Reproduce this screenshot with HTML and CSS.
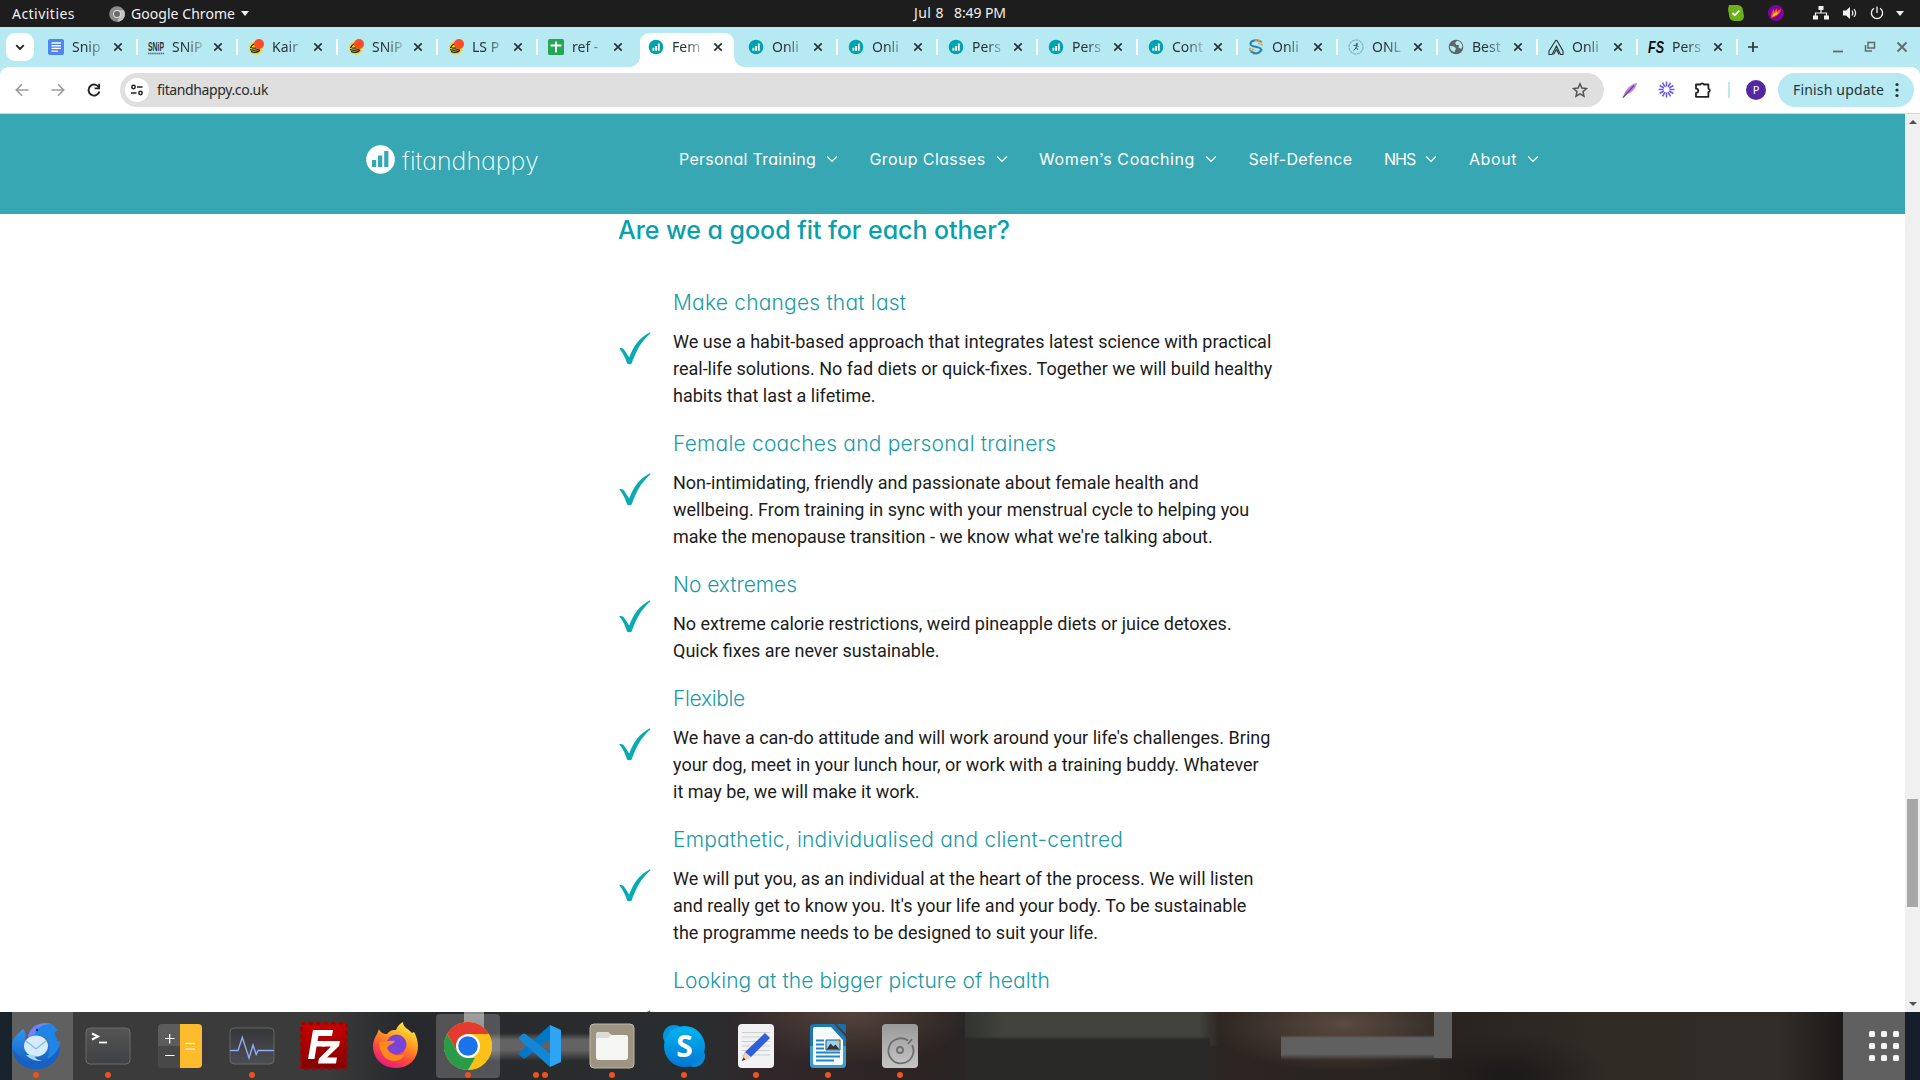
FILE: index.html
```html
<!DOCTYPE html>
<html lang="en">
<head>
<meta charset="utf-8">
<title>fitandhappy</title>
<link rel="stylesheet" href="styles.css">
</head>
<body>
<svg class="defs" width="0" height="0">
  <defs>
    <linearGradient id="blue" x1="0" y1="0" x2="0" y2="1"><stop offset="0" stop-color="#00b5f0"/><stop offset="1" stop-color="#0078d4"/></linearGradient>
    <linearGradient id="bird" x1="0" y1="0" x2="0" y2="1"><stop offset="0" stop-color="#2b9af3"/><stop offset="1" stop-color="#1455b5"/></linearGradient>
    <linearGradient id="fox" x1=".8" y1="0" x2=".3" y2="1"><stop offset="0" stop-color="#fff44f"/><stop offset=".4" stop-color="#ff9a1f"/><stop offset=".7" stop-color="#ff4a3c"/><stop offset="1" stop-color="#e31587"/></linearGradient>
    <linearGradient id="slate" x1="0" y1="0" x2="0" y2="1"><stop offset="0" stop-color="#555"/><stop offset="1" stop-color="#3f4042"/></linearGradient>
    <linearGradient id="mon" x1="0" y1="0" x2="0" y2="1"><stop offset="0" stop-color="#35363a"/><stop offset="1" stop-color="#4c4e54"/></linearGradient>
    <linearGradient id="red" x1="0" y1="0" x2="0" y2="1"><stop offset="0" stop-color="#c80000"/><stop offset="1" stop-color="#840000"/></linearGradient>
    <linearGradient id="disk" x1="0" y1="0" x2="0" y2="1"><stop offset="0" stop-color="#9a9a9a"/><stop offset="1" stop-color="#c6c6c6"/></linearGradient>
    <symbol id="fit" viewBox="0 0 16 16"><circle cx="8" cy="8" r="7.3" fill="#00a3ad"/><path d="M4.500 8.800h1.800v3H4.500zM7.200 7h1.800v4.800H7.200zM9.900 4.500h1.800v7.300H9.900z" fill="#fff"/></symbol>
    <symbol id="kite" viewBox="0 0 16 16"><circle cx="7.8" cy="9" r="6.8" fill="#f5d327"/><path d="M2 10.500c4 1.500 7 1 9.500-1M3 12.500c3 1.500 7 1 9-1.500M2.500 9c1-3 3-4 5-5M4 8.500c0 1 3 .8 5 .2" stroke="#26251c" stroke-width="1.300" fill="none"/><circle cx="11" cy="5" r="5" fill="#fd4d22"/></symbol>
    <symbol id="x" viewBox="0 0 10 10"><path d="M1.300 1.300l7.400 7.400M8.700 1.300L1.300 8.700" stroke="#24353a" stroke-width="1.700"/></symbol>
    <symbol id="chev" viewBox="0 0 12 8"><path d="M1.200 1.500L6 6.400l4.800-4.900" stroke="#fff" stroke-width="1.200" fill="none"/></symbol>
    <symbol id="tick" viewBox="0 0 32 34"><path d="M.8 17.500C3 16.300 5.200 17.500 6.500 20l4.200 6.500C14.500 16 20.500 6.500 31.600 1.200l.2 1.200C22 11 17.500 20.500 13.200 32.200c-.7 1.400-4 1.300-4.700 0C6.800 27 4.500 21.500.8 17.500z" fill="#08abb0"/></symbol>
  </defs>
</svg>

<header class="topbar">
  <div class="top-left">
    <span class="activities">Activities</span>
    <svg width="16" height="16" viewBox="0 0 16 16"><circle cx="8" cy="8" r="7.800" fill="#8c8c8c"/><path d="M8 4.300h7A7.800 7.800 0 0 1 8.300 15.800L11 10z" fill="#c4c4c4"/><circle cx="8" cy="8" r="3.900" fill="#ddd"/><circle cx="8" cy="8" r="3" fill="#6b6b6b"/></svg>
    <span class="appname">Google Chrome</span>
    <i class="caret"></i>
  </div>
  <div class="clock"><span class="date">Jul 8</span><span>8:49 PM</span></div>
  <div class="tray">
    <svg class="t1" width="16" height="16" viewBox="0 0 16 16"><path d="M1 0h9a6 6 0 0 1 5 6l1 5c0 3-2 5-5 5H6a6 6 0 0 1-5-6L0 4z" fill="#6bb016"/><path d="M4.500 8l2.300 2.300L11.300 5.700" stroke="#fff" stroke-width="1.800" fill="none"/></svg>
    <svg class="t2" width="16" height="16" viewBox="0 0 16 16"><circle cx="8" cy="8" r="8" fill="#7c05a0"/><path d="M3 13c0-4 2-8 3-9v3l3-4v3l4-2c0 4-4 8-10 9z" fill="#ff4a1c"/><path d="M4 11.500L6.500 7v2L9 6v2l2-1c-2 3-4 4-7 4.500z" fill="#ffc12e"/></svg>
    <svg class="t3" width="16" height="14" viewBox="0 0 16 14"><path d="M5.500 0h5v4h-5zM0 9.500h5v4H0zM11 9.500h5v4h-5z" fill="#f2f2f2"/><path d="M8 3v4M2.500 10V7h11v3" stroke="#f2f2f2" stroke-width="1.200" fill="none"/></svg>
    <svg class="t4" width="16" height="14" viewBox="0 0 16 14"><path d="M1 4.500h3L8 1v12L4 9.500H1z" fill="#f2f2f2"/><path d="M10 4.500c1 1.500 1 3.500 0 5M12 3c2 2.500 2 5.500 0 8" stroke="#f2f2f2" stroke-width="1.200" fill="none"/></svg>
    <svg class="t5" width="14" height="14" viewBox="0 0 14 14"><path d="M7 .5v6.500M4 2.300a5.600 5.600 0 1 0 6 0" stroke="#f2f2f2" stroke-width="1.300" fill="none"/></svg>
    <i class="caret"></i>
  </div>
</header>

<nav class="tabs">
  <div class="tabsearch"><svg width="10" height="7" viewBox="0 0 10 7"><path d="M1.200 1.200L5 5l3.800-3.800" stroke="#222" stroke-width="1.900" fill="none"/></svg></div>
  <div class="tab"><svg class="fav" viewBox="0 0 16 16"><rect width="16" height="16" rx="2" fill="#4f84f3"/><path d="M3.500 4h9.500M3.500 6.700h9.500M3.500 9.400h9.500M3.500 12.100h6.500" stroke="#fff" stroke-width="1.400"/></svg><span>Snip</span><svg class="close"><use href="#x"/></svg></div>
  <div class="tab"><svg class="fav" viewBox="0 0 16 16"><text class="snp" x="0" y="11.500" textLength="16" lengthAdjust="spacingAndGlyphs">SNiP</text><path d="M0 14.500h16" stroke="#4e6c70" stroke-width="1.600" stroke-dasharray="1.500 .6"/></svg><span>SNiP</span><svg class="close"><use href="#x"/></svg></div>
  <div class="tab"><svg class="fav"><use href="#kite"/></svg><span>Kair</span><svg class="close"><use href="#x"/></svg></div>
  <div class="tab"><svg class="fav"><use href="#kite"/></svg><span>SNiP</span><svg class="close"><use href="#x"/></svg></div>
  <div class="tab"><svg class="fav"><use href="#kite"/></svg><span>LS P</span><svg class="close"><use href="#x"/></svg></div>
  <div class="tab nosep"><svg class="fav" viewBox="0 0 16 16"><rect width="16" height="16" rx="1.500" fill="#24a455"/><path d="M8 2.500v11M2.500 6.500h11" stroke="#fff" stroke-width="1.800"/></svg><span>ref -</span><svg class="close"><use href="#x"/></svg></div>
  <div class="tab active nosep"><svg class="fav"><use href="#fit"/></svg><span>Fem</span><svg class="close"><use href="#x"/></svg></div>
  <div class="tab"><svg class="fav"><use href="#fit"/></svg><span>Onli</span><svg class="close"><use href="#x"/></svg></div>
  <div class="tab"><svg class="fav"><use href="#fit"/></svg><span>Onli</span><svg class="close"><use href="#x"/></svg></div>
  <div class="tab"><svg class="fav"><use href="#fit"/></svg><span>Pers</span><svg class="close"><use href="#x"/></svg></div>
  <div class="tab"><svg class="fav"><use href="#fit"/></svg><span>Pers</span><svg class="close"><use href="#x"/></svg></div>
  <div class="tab"><svg class="fav"><use href="#fit"/></svg><span>Cont</span><svg class="close"><use href="#x"/></svg></div>
  <div class="tab"><svg class="fav" viewBox="0 0 16 16"><path d="M13.500 3C9 0 2 1.500 2.500 5.300c.5 3.200 10.500 1.500 10.500 5.200 0 3.500-6 5-10.500 2" stroke="#2583b8" stroke-width="2" fill="none"/><path d="M7 1.500c3-.8 6 .5 7.500 3.500M10 4.500c2 0 4 1 5 2.500M1 9.500c2.500 0 5 .8 6 2.500" stroke="#e59a52" stroke-width="1.600" stroke-dasharray="2 1" fill="none"/><path d="M5 14.800c4 1 8-1 9.500-4.500M1 11c2 0 4 1 5 2.500" stroke="#777" stroke-dasharray="2 .7" fill="none"/></svg><span>Onli</span><svg class="close"><use href="#x"/></svg></div>
  <div class="tab"><svg class="fav" viewBox="0 0 16 16"><circle cx="8" cy="8" r="7" fill="none" stroke="#86b7bf" stroke-width="1.300" stroke-dasharray="3 .6"/><circle cx="9" cy="5" r="1" fill="#33565e"/><path d="M5.500 6.500l3-.5-.5 3-2.500 2.500M8 8.500l2 2.500M8.500 6.500l2 1" stroke="#33565e" fill="none"/></svg><span>ONL</span><svg class="close"><use href="#x"/></svg></div>
  <div class="tab"><svg class="fav" viewBox="0 0 16 16"><circle cx="8" cy="8" r="7.300" fill="#5f6569"/><path d="M2 7l4 .5 2 2L6.500 13C3.500 12.500 1.500 10 2 7zM9 1.800L7 4l1.500 2H11l-.5 2.500 2.500 1.500 1.300-2C14.500 5 12.500 2.300 9 1.800z" fill="#b6e9f1"/></svg><span>Best</span><svg class="close"><use href="#x"/></svg></div>
  <div class="tab"><svg class="fav" viewBox="0 0 16 16"><path d="M1 15.500V12L7 2.500C7.500 1 9 1 9.500 2.500L15 12v3.500h-2.500L8.500 7 4 15.500zM5.500 15.500l3-5 2.500 5" stroke="#26363a" stroke-width="1.100" fill="none"/></svg><span>Onli</span><svg class="close"><use href="#x"/></svg></div>
  <div class="tab"><svg class="fav" viewBox="0 0 16 16"><text class="fs" x="0" y="14" textLength="16" lengthAdjust="spacingAndGlyphs">FS</text></svg><span>Pers</span><svg class="close"><use href="#x"/></svg></div>
  <svg class="plus" width="12" height="12" viewBox="0 0 12 12"><path d="M6 1v10M1 6h10" stroke="#24353a" stroke-width="1.700"/></svg>
  <div class="winctl">
    <svg width="12" height="12" viewBox="0 0 12 12"><path d="M1 10.500h10" stroke="#5c6b70" stroke-width="1.800"/></svg>
    <svg width="12" height="12" viewBox="0 0 12 12"><path d="M4 1.500h6.500v5.500H4z" stroke="#5c6b70" stroke-width="1.500" fill="none"/><path d="M1.500 4v6H8" stroke="#5c6b70" stroke-width="1.500" fill="none"/></svg>
    <svg width="12" height="12" viewBox="0 0 12 12"><path d="M1.500 1.500l9 9M10.500 1.500l-9 9" stroke="#5c6b70" stroke-width="1.800"/></svg>
  </div>
</nav>

<div class="toolbar">
  <svg class="b1" width="14" height="14" viewBox="0 0 14 14"><path d="M13.500 7H1.500M7 1.300L1.300 7 7 12.700" stroke="#9c9c9c" stroke-width="1.600" fill="none"/></svg>
  <svg class="b2" width="14" height="14" viewBox="0 0 14 14"><path d="M.5 7h12M7 1.300L12.700 7 7 12.700" stroke="#9c9c9c" stroke-width="1.600" fill="none"/></svg>
  <svg class="b3" width="14" height="14" viewBox="0 0 14 14"><path d="M12 4.600A5.500 5.500 0 1 0 12.400 8.500" stroke="#222" stroke-width="1.900" fill="none"/><path d="M13 .8v5.400H7.600V4.500h3.700V.8z" fill="#222"/></svg>
  <div class="omnibox">
    <div class="site"><svg width="14" height="12" viewBox="0 0 14 12"><g fill="none" stroke="#222" stroke-width="1.500"><circle cx="3.500" cy="3" r="1.700"/><path d="M7 3h5.500M1 9h5.500"/><circle cx="10.500" cy="9" r="1.700"/></g></svg></div>
    <span class="url">fitandhappy.co.uk</span>
    <svg class="star" width="16" height="16" viewBox="0 0 16 16"><path d="M8 1.800l1.900 4.300 4.600.4-3.500 3.100 1 4.600L8 11.800l-4 2.400 1-4.600L1.500 6.500l4.600-.4z" stroke="#555" stroke-width="1.500" fill="none"/></svg>
  </div>
  <svg class="e1" width="16" height="16" viewBox="0 0 16 16"><path d="M1.500 14.500C3 8 8 2.500 15 .8 14 7 9 12 3.500 12.500z" fill="#c38be0"/><path d="M1 15.500L12 3.500" stroke="#693a9c" stroke-width="1.300"/></svg>
  <svg class="e2" width="17" height="17" viewBox="0 0 17 17"><path d="M8.500 .5v5M8.500 11.500v5M.5 8.500h5M11.500 8.500h5M4.500 1.600l2.500 4.300M10 11.100l2.500 4.300M12.500 1.600L10 5.900M7 11.100l-2.500 4.300M1.600 4.500l4.300 2.500M11.100 10l4.300 2.500M15.400 4.500L11.100 7M5.900 10l-4.300 2.500" stroke="#6a5cf0" stroke-width="1.600"/></svg>
  <svg class="e3" width="18" height="18" viewBox="0 0 18 18"><path d="M2 3.500h4.500a1.800 1.800 0 0 1 3.400 0h4.500v4.200a1.800 1.800 0 0 1 0 3.500v4.600H2v-4c3 0 3-4.200 0-4.200z" stroke="#222" stroke-width="1.800" fill="none" stroke-linejoin="round"/></svg>
  <i class="bar"></i>
  <span class="avatar">P</span>
  <div class="finish"><span>Finish update</span><svg width="4" height="16" viewBox="0 0 4 16"><g fill="#24353a"><circle cx="2" cy="2.500" r="1.600"/><circle cx="2" cy="8" r="1.600"/><circle cx="2" cy="13.500" r="1.600"/></g></svg></div>
</div>

<div class="viewport">
  <div class="page">
    <div class="siteheader">
      <a class="logo"><svg width="29" height="29" viewBox="0 0 29 29"><circle cx="14.500" cy="14.500" r="14.300" fill="#fff"/><path d="M6 15h4.200v7H6zM12 10.500h4.300V22H12zM18.200 6h4.200v16h-4.200z" fill="#36a7b3"/></svg><span>fitandhappy</span></a>
      <div class="menu">
        <a class="m-pt"><span>Personal Training</span><svg><use href="#chev"/></svg></a>
        <a class="m-gc"><span>Group Classes</span><svg><use href="#chev"/></svg></a>
        <a class="m-wc"><span>Women’s Coaching</span><svg><use href="#chev"/></svg></a>
        <a class="m-sd"><span>Self-Defence</span></a>
        <a class="m-nhs"><span>NHS</span><svg><use href="#chev"/></svg></a>
        <a class="m-about"><span>About</span><svg><use href="#chev"/></svg></a>
      </div>
    </div>
    <main class="content">
      <h2>Are we a good fit for each other?</h2>
      <section class="item"><svg><use href="#tick"/></svg><div><h3>Make changes that last</h3><p>We use a habit-based approach that integrates latest science with practical<br>real-life solutions. No fad diets or quick-fixes. Together we will build healthy<br>habits that last a lifetime.</p></div></section>
      <section class="item"><svg><use href="#tick"/></svg><div><h3>Female coaches and personal trainers</h3><p>Non-intimidating, friendly and passionate about female health and<br>wellbeing. From training in sync with your menstrual cycle to helping you<br>make the menopause transition - we know what we're talking about.</p></div></section>
      <section class="item short"><svg><use href="#tick"/></svg><div><h3 class="snug">No extremes</h3><p>No extreme calorie restrictions, weird pineapple diets or juice detoxes.<br>Quick fixes are never sustainable.</p></div></section>
      <section class="item"><svg><use href="#tick"/></svg><div><h3 class="tight">Flexible</h3><p>We have a can-do attitude and will work around your life's challenges. Bring<br>your dog, meet in your lunch hour, or work with a training buddy. Whatever<br>it may be, we will make it work.</p></div></section>
      <section class="item"><svg><use href="#tick"/></svg><div><h3>Empathetic, individualised and client-centred</h3><p>We will put you, as an individual at the heart of the process. We will listen<br>and really get to know you. It's your life and your body. To be sustainable<br>the programme needs to be designed to suit your life.</p></div></section>
      <section class="item"><svg><use href="#tick"/></svg><div><h3 class="even">Looking at the bigger picture of health</h3></div></section>
    </main>
  </div>
  <div class="scroll"><i class="up"></i><i class="thumb"></i><i class="down"></i></div>
</div>

<footer class="dock">
  <div class="app"><svg viewBox="0 0 48 48"><path d="M11 7c3 3 3 7 2 12l3 12 22-10 10-2c1 17-9 28-24 28C9 47-1 36 0 22 1 15 6 12 11 7z" fill="url(#bird)"/><path d="M16 13c3-8 9-12 18-12 7 0 9 4 12 8-3 0-4 1-3 4 4 8 5 15 3 21L35 38c4-9 4-18-3-23-5-3-11-2-16 3z" fill="#1f86e8"/><path d="M16 14c2-8 9-13 18-13l5 1c-9 0-14 4-16 10-2 1-5 2-7 6z" fill="#7b7ff0"/><path d="M1 27c5 7 12 13 22 13 10 0 20-5 25-17 0 14-9 24-23 24C11 47 2 39 1 27z" fill="#1760c4"/><ellipse cx="24" cy="24" rx="12" ry="10.500" fill="#d3ebfc"/><path d="M14 33c5 5 10 6 16 6-5-1-7-3-8-6z" fill="#a9d6f8"/><path d="M14 19l10 8 10-8" stroke="#88b9df" stroke-width="1.300" fill="none"/><circle cx="25" cy="8" r="1.200" fill="#0b3276"/></svg><i></i></div>
  <div class="app"><svg viewBox="0 0 48 48"><rect x="2" y="6" width="44" height="36" rx="4" fill="url(#slate)" stroke="#6c6c6c"/><path d="M8 11.500l6 3-6 3" stroke="#fff" stroke-width="2" fill="none"/><path d="M15 20.500h8" stroke="#fff" stroke-width="1.800"/></svg><i></i></div>
  <div class="app"><svg viewBox="0 0 48 48"><rect x="2" y="2" width="44" height="44" rx="4" fill="#5c5c5c"/><path d="M2 24h22v22H6a4 4 0 0 1-4-4z" fill="#484848"/><path d="M24 2h18a4 4 0 0 1 4 4v36a4 4 0 0 1-4 4H24z" fill="#fdbc2c"/><path d="M9 16.500h9.500M13.700 12v9.500M9 33.500h9.500M29 21.500h10M29 27h10" stroke="#fff" stroke-width="1.200"/></svg></div>
  <div class="app"><svg viewBox="0 0 48 48"><rect x="2" y="6" width="44" height="36" rx="4" fill="url(#mon)" stroke="#65676a"/><path d="M2 28.500h8l4.300-13L21 36l4-13 3.200 9.500 2-4H46" stroke="#8fadf0" stroke-width="1.400" fill="none"/></svg><i></i></div>
  <div class="app"><svg viewBox="0 0 48 48"><rect x="1.500" y="1.500" width="45" height="45" fill="url(#red)"/><rect x="1.500" y="1.500" width="45" height="45" fill="none" stroke="#a30000" stroke-width="3" stroke-dasharray="4 3.500"/><path d="M8 37l5-29h20l-1 6H18.500l-1 5H26l-1 5.500h-8.500L14.500 37z" fill="#fff"/><path d="M23 19h17l-1 5-12 11.500h10l-1 6H18l1-5L31 24.500h-9z" fill="#fff"/></svg></div>
  <div class="app"><svg viewBox="0 0 48 48"><path d="M7 7c1 3 4 5 8 5 3-4 6-4 9-4 2-5 5-7 7-8 0 6 6 7 9 11l2-1c2 3 4 9 4 14 0 13-9 22-22 22S1 37 1 24c0-5 2-9 4-12z" fill="url(#fox)"/><circle cx="24.500" cy="22.500" r="10" fill="#7b44d9"/><path d="M7 20c7 0 11-2 16-1-1 3-6 3-8 7 1 5 9 10 18 6-4 9-17 9-22 1-2-4-4-8-4-13z" fill="#ff8a1c"/></svg></div>
  <div class="app current"><svg viewBox="0 0 48 48"><circle cx="24" cy="24" r="24" fill="#fbc116"/><path d="M3.200 12A24 24 0 0 1 44.800 12H24L13.600 30z" fill="#e33b2e"/><path d="M3.200 12L13.600 30 24 36h10.400L24 48A24 24 0 0 1 3.200 12z" fill="#2a9b48"/><path d="M34.400 30L24 48a24 24 0 0 0 20.800-36H24z" fill="#fbc116"/><circle cx="24" cy="24" r="12" fill="#fff"/><circle cx="24" cy="24" r="9.800" fill="#1a73e8"/></svg><i></i></div>
  <div class="app"><svg viewBox="0 0 48 48"><path d="M34 3L3.500 30.500c-1 1-.5 2 0 2.500l3 3c1 .7 2 .7 3 0L36 15z" fill="#0078c8"/><path d="M34 45L3.500 17.500c-1-1-.5-2 0-2.500l3-3c1-.7 2-.7 3 0L36 33z" fill="#1387d6"/><path d="M34 3l11 5v32l-11 5z" fill="#2ea5f3"/></svg><i></i><i></i></div>
  <div class="app"><svg viewBox="0 0 48 48"><rect x="2" y="2" width="44" height="44" rx="4" fill="#9d9582" stroke="#bdb7a7"/><path d="M8 13c0-2 1-3 2.500-3h9c2 0 2 3 5 3H38c1.500 0 2 1 2 2v20c0 1.500-1 3-2.500 3h-27C9 38 8 37 8 35z" fill="#f5f5f4"/><path d="M8 17v-4c0-2 1-3 2.500-3h9c2 0 2 3 4 3-2 1-2 3-4 3H10z" fill="#dcdad4"/></svg><i></i></div>
  <div class="app"><svg viewBox="0 0 48 48"><circle cx="14" cy="14" r="11" fill="#0294dc"/><circle cx="34" cy="34" r="11" fill="#0a8ad8"/><circle cx="24.500" cy="24.500" r="20.500" fill="url(#blue)"/><text class="skype" x="24.500" y="35" text-anchor="middle">S</text></svg><i></i></div>
  <div class="app"><svg viewBox="0 0 48 48"><rect x="6" y="2" width="36" height="44" rx="4" fill="#f2f2f4"/><path d="M10 10.500h28M10 15h28M10 19.500h28M10 24h28M10 28.500h28M10 33h28" stroke="#cfcfd2"/><path d="M10 39l3-9L33 11l5 5-19 19z" fill="#2f60d8"/><path d="M10 39l3-9 6.500 5.500z" fill="#f4d3b4"/><path d="M10 39l1.500-3.500 2 2z" fill="#333"/></svg><i></i></div>
  <div class="app"><svg viewBox="0 0 48 48"><path d="M10 2h20l12 13v27a4 4 0 0 1-4 4H10a4 4 0 0 1-4-4V6a4 4 0 0 1 4-4z" fill="#1c78b0"/><path d="M6 24h36v18a4 4 0 0 1-4 4H10a4 4 0 0 1-4-4z" fill="#3e9dd0"/><path d="M32 2h8.500c1 0 1.500 1 1.500 1.500V12z" fill="#1a6fa8"/><path d="M11 5h16l12 13v23a2 2 0 0 1-2 2H11a2 2 0 0 1-2-2V7a2 2 0 0 1 2-2z" fill="#f8fbfd"/><path d="M12 18.500h8M12 22.500h8M12 26.500h8M12 30.500h24M12 34.500h24M12 38.500h18" stroke="#2186c4" stroke-width="2"/><path d="M22 18h14v10H22z" fill="#9ad2f0" stroke="#24577a"/><path d="M22.500 27.500l4-6 3 3 2-2 4 5z" fill="#353535"/><circle cx="34" cy="20" r="1.500" fill="#f7bd23"/></svg><i></i></div>
  <div class="app"><svg viewBox="0 0 48 48"><rect x="6" y="2" width="36" height="44" rx="4" fill="url(#disk)"/><path d="M32 18.500A12.500 12.500 0 1 0 36 23M32 22l4-5" stroke="#6f6f6f" stroke-width="1.800" fill="none"/><circle cx="24" cy="28" r="3" stroke="#6f6f6f" stroke-width="1.800" fill="none"/></svg><i></i></div>
  <div class="grid"><b></b><b></b><b></b><b></b><b></b><b></b><b></b><b></b><b></b></div>
</footer>
</body>
</html>
```
FILE: styles.css
```css
* { box-sizing: border-box; }
body { margin: 0; width: 1920px; height: 1080px; overflow: hidden; display: flex; flex-direction: column; font-family: "Noto Sans", "Open Sans", sans-serif; font-size: 14px; background: #fff; }
.defs { position: absolute; }
svg { display: block; flex: none; }
span { white-space: nowrap; }

.topbar { height: 27px; background: #1d1d1d; color: #f0f0f0; display: grid; grid-template-columns: 1fr auto 1fr; align-items: center; }
.top-left { display: flex; align-items: center; padding-left: 12px; }
.activities { margin-right: 34px; letter-spacing: .467px; }
.appname { margin-left: 6px; letter-spacing: .05px; }
.caret { border: 4.500px solid transparent; border-top: 5px solid #f0f0f0; border-bottom: 0; margin-left: 6px; }
.clock { display: flex; gap: 10px; margin-top: -2px; letter-spacing: -.085px; }
.date { letter-spacing: .45px; }
.tray { display: flex; align-items: center; justify-content: flex-end; padding-right: 16px; margin-top: -1px; }
.t2 { margin-left: 24px; }
.t3 { margin-left: 29px; }
.t4 { margin-left: 13px; }
.t5 { margin-left: 12px; }
.tray .caret { margin-left: 12px; }

.tabs { height: 40px; background: #b6e9f1; display: flex; align-items: center; padding-left: 6px; }
.tabsearch { width: 28px; height: 28px; border-radius: 9px; background: #fff; margin-right: 4px; display: flex; align-items: center; justify-content: center; }
.tab { width: 100px; height: 34px; margin-top: 6px; padding: 0 15px 7px 10px; display: flex; align-items: center; position: relative; color: #24353a; font-size: 14px; }
.tab::after { content: ""; position: absolute; right: 0; top: 6px; width: 2px; height: 16px; background: #fff; }
.tab.nosep::after { display: none; }
.tab span { margin-left: 8px; -webkit-mask-image: linear-gradient(90deg, #000 14px, rgba(0,0,0,.25) 30px); mask-image: linear-gradient(90deg, #000 14px, rgba(0,0,0,.25) 30px); }
.fav { width: 16px; height: 16px; }
.close { width: 10px; height: 10px; margin-left: auto; }
.snp { font: bold 13px "Liberation Sans", sans-serif; fill: #26363a; }
.fs { font: italic bold 17px "Liberation Sans", sans-serif; fill: #111; }
.tab.active { width: 94px; margin-left: 2px; margin-right: 4px; padding: 0 11px 7px 8px; background: #fff; border-radius: 9px 9px 0 0; }
.tab.active::before { content: ""; position: absolute; left: -10px; right: -10px; bottom: 0; height: 10px; background: radial-gradient(circle at 0 0, transparent 9.500px, #fff 10px) left / 10px 10px no-repeat, radial-gradient(circle at 100% 0, transparent 9.500px, #fff 10px) right / 10px 10px no-repeat; }
.plus { margin-left: 9px; }
.winctl { margin-left: auto; display: flex; gap: 20px; padding-right: 12px; }

.toolbar { height: 47px; padding: 6px 6px 7px 15px; display: flex; align-items: center; border-bottom: 1px solid #cfd8d8; background: radial-gradient(circle at 100% 100%, #fff 7.500px, #b6e9f1 8px) left top / 8px 8px no-repeat, radial-gradient(circle at 0 100%, #fff 7.500px, #b6e9f1 8px) right top / 8px 8px no-repeat, #fff; color: #2b2b2b; }
.b2 { margin-left: 22px; }
.b3 { margin-left: 22px; }
.omnibox { flex: none; width: 1484px; height: 34px; margin-left: 19px; border-radius: 17px; background: #dfdfdf; display: flex; align-items: center; padding: 0 16px 0 5px; }
.site { width: 24px; height: 24px; border-radius: 50%; background: #fff; display: flex; align-items: center; justify-content: center; margin-right: 8px; }
.url { letter-spacing: -.38px; }
.star { margin-left: auto; }
.e1 { margin-left: 18px; }
.e2 { margin-left: 20px; }
.e3 { margin-left: 19px; }
.bar { width: 2px; height: 16px; background: #b6e9f1; margin-left: 16px; }
.avatar { width: 20px; height: 20px; border-radius: 50%; background: #5427a5; color: #fff; font-size: 11px; line-height: 20px; text-align: center; margin-left: 16px; }
.finish { margin-left: 12px; width: 136px; height: 34px; border-radius: 17px; background: #b6e9f1; display: flex; align-items: center; justify-content: space-between; padding: 0 15px; color: #24353a; letter-spacing: .167px; }

.viewport { height: 898px; display: flex; overflow: hidden; }
.page { width: 1905px; height: 898px; overflow: hidden; }
.siteheader { height: 100px; background: #36a7b3; color: #fff; display: flex; padding-left: 366px; font-family: Inter, "Noto Sans", sans-serif; font-feature-settings: "cv11", "ss03"; }
.logo { display: flex; width: 313px; padding-top: 31px; align-items: flex-start; gap: 7px; }
.logo span { font-size: 25px; font-weight: 200; line-height: 33px; }
.menu { display: flex; gap: 31.500px; height: 89px; align-items: center; font-size: 16px; }
.menu a { display: flex; align-items: center; gap: 10px; }
.menu svg { width: 12px; height: 8px; }
.m-pt { letter-spacing: .26px; }
.m-gc { letter-spacing: .38px; }
.m-wc { letter-spacing: .6px; }
.m-sd { letter-spacing: .34px; }
.m-nhs { letter-spacing: -.9px; }
.m-about { letter-spacing: .58px; }
.content { width: 670px; margin-left: 618px; }
h2, h3 { margin: 0; font-family: Inter, "Noto Sans", sans-serif; font-feature-settings: "cv11"; white-space: nowrap; }
h2 { color: #08a0ac; font-size: 25px; font-weight: 500; line-height: 32px; margin-bottom: 45px; letter-spacing: -.05px; }
.item { display: flex; align-items: center; height: 118px; margin-bottom: 23px; }
.item.short { height: 91px; }
.item > svg { width: 33px; height: 34px; margin: -5px 22px 0 0; }
.item > div { align-self: flex-start; }
h3 { color: #1a9ba6; font-size: 21px; font-weight: 300; line-height: 24px; margin-bottom: 13px; letter-spacing: .19px; }
h3.even { letter-spacing: .085px; }
h3.snug { letter-spacing: -.04px; }
h3.tight { letter-spacing: -.35px; }
p { margin: 0; font: 18px/27px Roboto, sans-serif; color: #1c1c1c; white-space: nowrap; }
.scroll { width: 15px; background: #f0f0f0; display: flex; flex-direction: column; align-items: center; }
.up { border: 4px solid transparent; border-bottom: 4px solid #505050; border-top: 0; margin-top: 6px; }
.down { border: 4px solid transparent; border-top: 4px solid #505050; border-bottom: 0; margin: auto 0 6px; }
.thumb { width: 11px; height: 108px; background: #a8a8a8; margin-top: 675px; }

.dock { height: 68px; display: flex; padding-top: 2px;
  background:
    linear-gradient(#161d2b, #161d2b) 1905px 0 / 15px 68px no-repeat,
    linear-gradient(#606060, #606060) 1843px 0 / 62px 68px no-repeat,
    linear-gradient(#606060, #606060) 1434px 0 / 18px 46px no-repeat,
    linear-gradient(transparent, #606060 3px, #606060 19px, transparent) 1281px 23px / 171px 25px no-repeat,
    radial-gradient(ellipse at 60% 20%, #5a4a40, transparent 70%) 1210px 0 / 224px 60px no-repeat,
    linear-gradient(transparent 24px, #282827 28px) 965px 0 / 245px 68px no-repeat,
    linear-gradient(90deg, #30332f, #41423c 15%, #41423c 92%, #2c2521) 965px 0 / 255px 34px no-repeat,
    radial-gradient(ellipse at 40% 90%, #1b1a19, transparent 70%) 1440px 20px / 170px 48px no-repeat,
    radial-gradient(ellipse at 50% 0, #54433c, transparent 75%) 735px 0 / 230px 50px no-repeat,
    linear-gradient(transparent, #636363 7px, #636363 17px, transparent) 480px 21px / 125px 28px no-repeat,
    linear-gradient(#8a8a8a, #606060) 464px 0 / 20px 48px no-repeat,
    linear-gradient(#606060, #606060) 12px 0 / 61px 68px no-repeat,
    linear-gradient(#18232d, #18232d) 0 0 / 12px 68px no-repeat,
    linear-gradient(90deg, #3b3b3b 330px, #28292c 400px, #2a2d2f 700px, #30272a 760px, #2b2423 930px, #262626 980px, #2a2a29 1190px, #2c2521 1230px, #28231f 1440px, #312b26 1600px, #312c28 1780px, #1c1a18 1843px); }
.app { width: 72px; height: 64px; padding-top: 8px; display: flex; flex-wrap: wrap; justify-content: center; column-gap: 3px; align-content: flex-start; }
.app svg { width: 48px; height: 48px; margin: 0 10px; }
.app i { width: 6px; height: 6px; border-radius: 50%; background: #e95420; margin-top: 2px; }
.current { width: 64px; margin: 0 4px; border-radius: 4px; background: rgba(255,255,255,.2); }
.current svg { margin: 0 8px; }
.skype { font: bold 30px "Open Sans", "Noto Sans", sans-serif; fill: #fff; }
.grid { margin-left: auto; margin-right: 21px; margin-top: -2px; align-self: center; display: grid; grid-template-columns: repeat(3, 6px); gap: 6px; }
.grid b { height: 6px; border-radius: 1.500px; background: #f4f4f4; }
```
